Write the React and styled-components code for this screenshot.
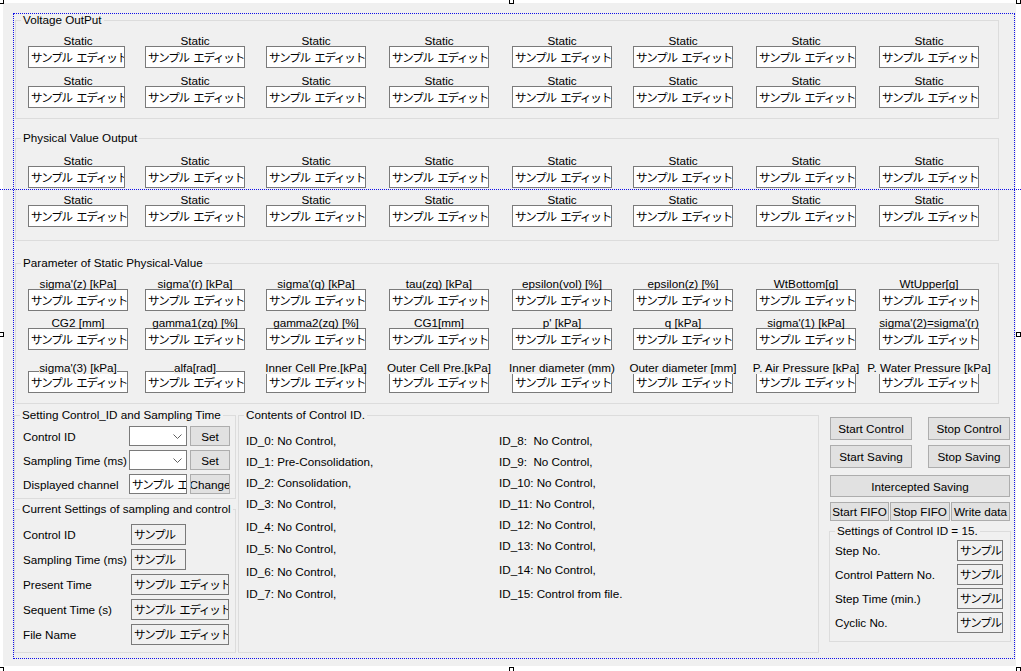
import React from 'react';
import styled, { createGlobalStyle } from 'styled-components';

const GlobalStyle = createGlobalStyle`
  html, body { margin: 0; padding: 0; background: #fff; }
  body {
    font-family: "Liberation Sans", "Noto Sans CJK JP", sans-serif;
    font-size: 11.7px;
    color: #000;
  }
  * { box-sizing: border-box; }
`;

const Page = styled.div`
  position: relative;
  width: 1021px;
  height: 671px;
  overflow: hidden;
  background: #fff;
  padding: 3px 0 0 3px;
`;

const Form = styled.div`
  width: 1013px;
  height: 663px;
  background: #f0f0f0;
  padding: 11px 0 0 12px;
  display: flex;
  flex-direction: column;
`;

const Group = styled.fieldset`
  margin: ${(p) => p.$mt || 0}px 0 0 ${(p) => p.$ml || 0}px;
  padding: 0;
  border: 1px solid #dcdcdc;
  width: ${(p) => p.$w}px;
  min-width: 0;
  flex: none;
`;

const Legend = styled.legend`
  padding: 0 2px;
  margin-left: 5px;
  height: 12px;
  line-height: 12px;
  white-space: nowrap;
`;

const GroupBody = styled.div`
  padding: ${(p) => p.$pt}px 0 ${(p) => p.$pb}px ${(p) => p.$pl}px;
`;

const GridRow = styled.div`
  display: grid;
  grid-template-columns: 117px 121px 123px 123px 121px 123px 123px 100px;
  margin-top: ${(p) => p.$mt || 0}px;
`;

const Cell = styled.div`
  display: flex;
  flex-direction: column;
  width: 100px;
`;

const CellLabel = styled.div`
  height: 12px;
  line-height: 12px;
  display: flex;
  justify-content: center;
  white-space: nowrap;
  position: relative;
  z-index: ${(p) => (p.$overlap ? 1 : 0)};
`;

const LabelText = styled.span`
  background: ${(p) => (p.$overlap ? '#f0f0f0' : 'transparent')};
  line-height: 12px;
`;

const EditBox = styled.div`
  width: ${(p) => p.$w || 100}px;
  height: ${(p) => p.$h || 22}px;
  margin-top: ${(p) => (p.$mt === undefined ? 0 : p.$mt)}px;
  border: 1px solid #7a7a7a;
  background: ${(p) => (p.$readonly ? '#f0f0f0' : '#fff')};
  padding-left: 2px;
  overflow: hidden;
  white-space: pre;
  line-height: ${(p) => (p.$h || 22) - 2}px;
  font-family: "Noto Sans CJK JP", sans-serif;
  font-size: 11.5px;
  letter-spacing: -1.2px;
  word-spacing: 3px;
  flex: none;
`;

const BottomArea = styled.div`
  display: flex;
  align-items: stretch;
  margin: 5px 0 0 -1px;
`;

const LeftColumn = styled.div`
  display: flex;
  flex-direction: column;
  width: 222px;
  flex: none;
`;

const FormRow = styled.div`
  display: flex;
  align-items: center;
  height: ${(p) => p.$h}px;
  margin-top: ${(p) => p.$mt || 0}px;
`;

const RowLabel = styled.div`
  width: ${(p) => p.$w}px;
  white-space: nowrap;
  flex: none;
`;

const Combo = styled.div`
  width: 58px;
  height: 20px;
  border: 1px solid #7a7a7a;
  background: #fff;
  display: flex;
  align-items: center;
  justify-content: flex-end;
  padding-right: 4px;
  flex: none;
`;

const Btn = styled.button`
  width: ${(p) => p.$w}px;
  height: ${(p) => p.$h}px;
  margin-left: ${(p) => p.$ml || 0}px;
  background: #e1e1e1;
  border: 1px solid #adadad;
  padding: 0;
  font: inherit;
  color: #000;
  display: flex;
  align-items: center;
  justify-content: center;
  overflow: hidden;
  white-space: nowrap;
  flex: none;
`;

const ContentsGroup = styled(Group)`
  display: block;
`;

const ContentsBody = styled.div`
  display: flex;
  padding-left: 7px;
`;

const IdColumn = styled.div`
  width: ${(p) => p.$w}px;
  display: flex;
  flex-direction: column;
`;

const IdItem = styled.div`
  height: 14px;
  line-height: 14px;
  margin-top: ${(p) => p.$mt}px;
  white-space: pre;
`;

const RightColumn = styled.div`
  width: 182px;
  margin-left: 10px;
  display: flex;
  flex-direction: column;
  flex: none;
`;

const ButtonRow = styled.div`
  display: flex;
  justify-content: ${(p) => p.$justify || 'flex-start'};
  gap: ${(p) => p.$gap || 0}px;
  width: 181px;
  padding-left: 1px;
  margin-top: ${(p) => p.$mt}px;
`;

const SelectionFrame = styled.div`
  position: absolute;
  left: 13px;
  top: 13px;
  width: 1002px;
  height: 646px;
  border: 1px dotted #1010e8;
  pointer-events: none;
`;

const GuideLine = styled.div`
  position: absolute;
  left: 0;
  right: 0;
  top: 189px;
  border-top: 1px dotted #1010e8;
  pointer-events: none;
`;

const Handle = styled.div`
  position: absolute;
  width: 5px;
  height: 5px;
  border: 1px solid #000;
  background: #fff;
`;

const Chevron = () => (
  <svg width="9" height="5" viewBox="0 0 9 5">
    <path d="M0.5 0.5 L4.5 4.5 L8.5 0.5" fill="none" stroke="#606060" strokeWidth="1" />
  </svg>
);

const STATIC8 = Array(8).fill('Static');
const EDIT = 'サンプル エディット';

const groups = [
  {
    title: 'Voltage OutPut',
    mt: 0,
    pt: 9,
    pb: 10,
    rows: [
      { mt: 0, labels: STATIC8, narrowFirst: true },
      { mt: 7, labels: STATIC8, narrowFirst: true },
    ],
  },
  {
    title: 'Physical Value Output',
    mt: 13,
    pt: 11,
    pb: 13,
    rows: [
      { mt: 0, labels: STATIC8, narrowFirst: true },
      { mt: 6, labels: STATIC8 },
    ],
  },
  {
    title: 'Parameter of Static Physical-Value',
    mt: 16,
    pt: 9,
    pb: 10,
    rows: [
      {
        mt: 0,
        labels: ["sigma'(z) [kPa]", "sigma'(r) [kPa]", "sigma'(q) [kPa]", 'tau(zq) [kPa]', 'epsilon(vol) [%]', 'epsilon(z) [%]', 'WtBottom[g]', 'WtUpper[g]'],
      },
      {
        mt: 6,
        labels: ['CG2 [mm]', 'gamma1(zq) [%]', 'gamma2(zq) [%]', 'CG1[mm]', "p' [kPa]", 'q [kPa]', "sigma'(1) [kPa]", "sigma'(2)=sigma'(r)"],
      },
      {
        mt: 12,
        boxMt: -3,
        overlap: true,
        labels: ["sigma'(3) [kPa]", 'alfa[rad]', 'Inner Cell Pre.[kPa]', 'Outer Cell Pre.[kPa]', 'Inner diameter (mm)', 'Outer diameter [mm]', 'P. Air Pressure [kPa]', 'P. Water Pressure [kPa]'],
      },
    ],
  },
];

const idLeft = [
  ['ID_0: No Control,', 13],
  ['ID_1: Pre-Consolidation,', 7],
  ['ID_2: Consolidation,', 7],
  ['ID_3: No Control,', 7],
  ['ID_4: No Control,', 9],
  ['ID_5: No Control,', 8],
  ['ID_6: No Control,', 9],
  ['ID_7: No Control,', 8],
];

const idRight = [
  ['ID_8:  No Control,', 13],
  ['ID_9:  No Control,', 7],
  ['ID_10: No Control,', 7],
  ['ID_11: No Control,', 7],
  ['ID_12: No Control,', 7],
  ['ID_13: No Control,', 7],
  ['ID_14: No Control,', 10],
  ['ID_15: Control from file.', 10],
];

const currentSettings = [
  ['Control ID', 55, 'サンプル'],
  ['Sampling Time (ms)', 55, 'サンプル'],
  ['Present Time', 98, EDIT],
  ['Sequent Time (s)', 98, EDIT],
  ['File Name', 98, EDIT],
];

const controlSettings = ['Step No.', 'Control Pattern No.', 'Step Time (min.)', 'Cyclic No.'];

const handles = [
  [-1, -1], [509, -1], [1016, -1],
  [-1, 332], [1016, 332],
  [-1, 667], [509, 667], [1016, 667],
];

export default function App() {
  return (
    <>
      <GlobalStyle />
      <Page>
        <Form>
          {groups.map((g) => (
            <Group key={g.title} $w={984} $mt={g.mt}>
              <Legend>{g.title}</Legend>
              <GroupBody $pt={g.pt} $pb={g.pb} $pl={12}>
                {g.rows.map((r, ri) => (
                  <GridRow key={ri} $mt={r.mt}>
                    {r.labels.map((l, ci) => (
                      <Cell key={ci}>
                        <CellLabel $overlap={r.overlap}>
                          <LabelText $overlap={r.overlap}>{l}</LabelText>
                        </CellLabel>
                        <EditBox
                          $w={r.narrowFirst && ci === 0 ? 97 : 100}
                          $mt={r.boxMt === undefined ? -1 : r.boxMt}
                        >
                          {EDIT}
                        </EditBox>
                      </Cell>
                    ))}
                  </GridRow>
                ))}
              </GroupBody>
            </Group>
          ))}

          <BottomArea>
            <LeftColumn>
              <Group $w={222}>
                <Legend>Setting Control_ID and Sampling Time</Legend>
                <GroupBody $pt={5} $pb={4} $pl={8}>
                  <FormRow $h={20}>
                    <RowLabel $w={106}>Control ID</RowLabel>
                    <Combo><Chevron /></Combo>
                    <Btn $w={40} $h={20} $ml={3}>Set</Btn>
                  </FormRow>
                  <FormRow $h={20} $mt={4}>
                    <RowLabel $w={106}>Sampling Time (ms)</RowLabel>
                    <Combo><Chevron /></Combo>
                    <Btn $w={40} $h={20} $ml={3}>Set</Btn>
                  </FormRow>
                  <FormRow $h={20} $mt={4}>
                    <RowLabel $w={106}>Displayed channel</RowLabel>
                    <EditBox $w={58} $h={20}>{EDIT}</EditBox>
                    <Btn $w={40} $h={20} $ml={3}>Change</Btn>
                  </FormRow>
                </GroupBody>
              </Group>
              <Group $w={222} $mt={4}>
                <Legend>Current Settings of sampling and control</Legend>
                <GroupBody $pt={9} $pb={7} $pl={8}>
                  {currentSettings.map(([label, w, val], i) => (
                    <FormRow key={label} $h={21} $mt={i === 0 ? 0 : 4}>
                      <RowLabel $w={108}>{label}</RowLabel>
                      <EditBox $w={w} $h={21} $readonly>{val}</EditBox>
                    </FormRow>
                  ))}
                </GroupBody>
              </Group>
            </LeftColumn>

            <ContentsGroup $w={581} $ml={2}>
              <Legend>Contents of Control ID.</Legend>
              <ContentsBody>
                <IdColumn $w={253}>
                  {idLeft.map(([t, mt]) => (
                    <IdItem key={t} $mt={mt}>{t}</IdItem>
                  ))}
                </IdColumn>
                <IdColumn $w={300}>
                  {idRight.map(([t, mt]) => (
                    <IdItem key={t} $mt={mt}>{t}</IdItem>
                  ))}
                </IdColumn>
              </ContentsBody>
            </ContentsGroup>

            <RightColumn>
              <ButtonRow $mt={8} $justify="space-between">
                <Btn $w={82} $h={23}>Start Control</Btn>
                <Btn $w={82} $h={23}>Stop Control</Btn>
              </ButtonRow>
              <ButtonRow $mt={5} $justify="space-between">
                <Btn $w={82} $h={23}>Start Saving</Btn>
                <Btn $w={82} $h={23}>Stop Saving</Btn>
              </ButtonRow>
              <ButtonRow $mt={7}>
                <Btn $w={180} $h={22}>Intercepted Saving</Btn>
              </ButtonRow>
              <ButtonRow $mt={5} $gap={1}>
                <Btn $w={59} $h={19}>Start FIFO</Btn>
                <Btn $w={60} $h={19}>Stop FIFO</Btn>
                <Btn $w={59} $h={19}>Write data</Btn>
              </ButtonRow>
              <Group $w={182} $mt={4}>
                <Legend>Settings of Control ID = 15.</Legend>
                <GroupBody $pt={3} $pb={8} $pl={5}>
                  {controlSettings.map((label, i) => (
                    <FormRow key={label} $h={21} $mt={i === 0 ? 0 : 3}>
                      <RowLabel $w={122}>{label}</RowLabel>
                      <EditBox $w={46} $h={21} $readonly>サンプル</EditBox>
                    </FormRow>
                  ))}
                </GroupBody>
              </Group>
            </RightColumn>
          </BottomArea>
        </Form>

        <SelectionFrame />
        <GuideLine />
        {handles.map(([x, y]) => (
          <Handle key={`${x}-${y}`} style={{ left: x, top: y }} />
        ))}
      </Page>
    </>
  );
}
